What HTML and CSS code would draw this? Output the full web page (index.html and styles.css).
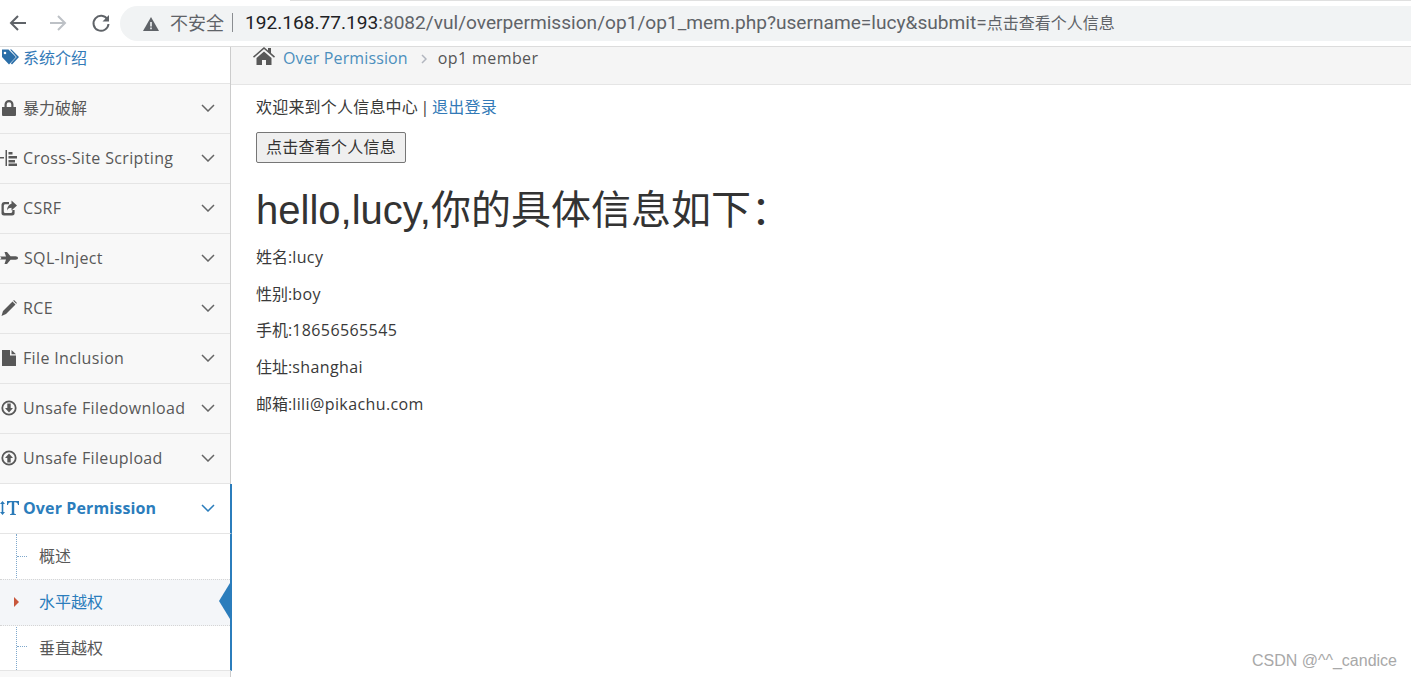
FILE: index.html
```html
<!DOCTYPE html>
<html>
<head>
  <title>Over Permission</title>
  <link rel="stylesheet" href="styles.css">
</head>
<body>
  <div class="browserBar">
    <svg class="navIcon" viewBox="0 0 20 20"><path d="M18 10H3M10 3l-7 7 7 7" fill="none" stroke="#5f6368" stroke-width="2"/></svg>
    <svg class="navIcon" viewBox="0 0 20 20"><path d="M2 10h15M10 3l7 7-7 7" fill="none" stroke="#bdc1c6" stroke-width="2"/></svg>
    <svg class="navIcon reload" viewBox="0 0 20 20"><path d="M16.5 6.500A7.500 7.500 0 1 0 17.500 11" fill="none" stroke="#5f6368" stroke-width="2"/><path d="M18 2v6.500h-6.500z" fill="#5f6368"/></svg>
    <div class="addressBar">
      <svg class="warnIcon" viewBox="0 0 16 14"><path d="M8 0l8 14H0z" fill="#5f6368"/><path d="M7.200 5h1.600v4.600H7.200zM7.200 10.600h1.600v1.600H7.200z" fill="#f1f3f4"/></svg>
      <span class="insecure">不安全</span>
      <span class="sep"></span>
      <span class="url"><b>192.168.77.193</b>:8082/vul/overpermission/op1/op1_mem.php?username=lucy&amp;submit=<i>点击查看个人信息</i></span>
    </div>
  </div>

  <div class="page">
    <ul class="sidebar">
      <li class="navItem intro">
        <svg class="icon tag" viewBox="0 0 17 16"><path d="M0 0h6.500L14 7.500 7 15 0 7.500zM3 2.200a1.300 1.300 0 1 0 0 2.600 1.300 1.300 0 0 0 0-2.600z" fill="#2a6ea8" fill-rule="evenodd"/><path d="M8 0h1.500L17 7.500 10 15 8.800 13.800 14.700 7.500z" fill="#2a6ea8"/></svg>
        <span>系统介绍</span>
      </li>
      <li class="navItem">
        <svg class="icon" viewBox="0 0 16 16"><path d="M1 7h14v8a1 1 0 0 1-1 1H2a1 1 0 0 1-1-1zM3.500 7V4.500a4.500 4.500 0 0 1 9 0V7h-2.200V4.500a2.300 2.300 0 0 0-4.600 0V7z" fill="#585858"/></svg>
        <span class="cjk">暴力破解</span>
        <svg class="chevron" viewBox="0 0 14 8"><path d="M1 1l6 6 6-6" fill="none" stroke="currentColor" stroke-width="1.500"/></svg>
      </li>
      <li class="navItem">
        <svg class="icon" viewBox="0 0 18 16"><path d="M0 7h4v1.500H0zM5.500 0H7v16H5.500zM8.500 2h4v2.500h-4zM8.500 6H17v2.500H8.500zM8.500 10H15v2.500H8.500zM8.500 13.500H17V16H8.500z" fill="#585858"/></svg>
        <span class="latin">Cross-Site Scripting</span>
        <svg class="chevron" viewBox="0 0 14 8"><path d="M1 1l6 6 6-6" fill="none" stroke="currentColor" stroke-width="1.500"/></svg>
      </li>
      <li class="navItem">
        <svg class="icon" viewBox="0 0 16 16"><path d="M3 2h5v2.200H4A1.500 1.500 0 0 0 2.800 5.700v5.800A1.500 1.500 0 0 0 4 13h6a1.500 1.500 0 0 0 1.300-1.500V10h2.300v2.500A2.700 2.700 0 0 1 11 15.500H3A2.700 2.700 0 0 1 .5 12.500v-8A2.700 2.700 0 0 1 3 2z" fill="#585858"/><path d="M10.500 .5L16 5.500l-5.500 5V7.800C8.500 7.800 7 8.500 6 10.500 6 7 8 4.500 10.500 3.800z" fill="#585858"/></svg>
        <span class="latin">CSRF</span>
        <svg class="chevron" viewBox="0 0 14 8"><path d="M1 1l6 6 6-6" fill="none" stroke="currentColor" stroke-width="1.500"/></svg>
      </li>
      <li class="navItem">
        <svg class="icon wide" viewBox="0 0 18 12"><path d="M0 4.500h6L4.500 0H7l3.500 4.300h5c1.500 0 2.500.8 2.500 1.700s-1 1.700-2.500 1.700h-5L7 12H4.500L6 7.500H0L1.500 6z" fill="#585858"/></svg>
        <span class="latin">SQL-Inject</span>
        <svg class="chevron" viewBox="0 0 14 8"><path d="M1 1l6 6 6-6" fill="none" stroke="currentColor" stroke-width="1.500"/></svg>
      </li>
      <li class="navItem">
        <svg class="icon" viewBox="0 0 16 16"><path d="M11.500 1.500l3 3L5 14l-4.500 2L2 11zM13 0l3 3-.8.8-3-3z" fill="#585858"/></svg>
        <span class="latin">RCE</span>
        <svg class="chevron" viewBox="0 0 14 8"><path d="M1 1l6 6 6-6" fill="none" stroke="currentColor" stroke-width="1.500"/></svg>
      </li>
      <li class="navItem">
        <svg class="icon" viewBox="0 0 14 16"><path d="M0 0h8v5.500h6V16H0zM9.500 0L14 4.200H9.500z" fill="#585858"/></svg>
        <span class="latin">File Inclusion</span>
        <svg class="chevron" viewBox="0 0 14 8"><path d="M1 1l6 6 6-6" fill="none" stroke="currentColor" stroke-width="1.500"/></svg>
      </li>
      <li class="navItem">
        <svg class="icon" viewBox="0 0 16 16"><circle cx="8" cy="8" r="6.700" fill="none" stroke="#585858" stroke-width="1.800"/><path d="M6.300 3.500h3.400V8H12l-4 4.500L4 8h2.300z" fill="#585858"/></svg>
        <span class="latin">Unsafe Filedownload</span>
        <svg class="chevron" viewBox="0 0 14 8"><path d="M1 1l6 6 6-6" fill="none" stroke="currentColor" stroke-width="1.500"/></svg>
      </li>
      <li class="navItem">
        <svg class="icon" viewBox="0 0 16 16"><circle cx="8" cy="8" r="6.700" fill="none" stroke="#585858" stroke-width="1.800"/><path d="M6.300 12.500h3.400V8H12L8 3.500 4 8h2.300z" fill="#585858"/></svg>
        <span class="latin">Unsafe Fileupload</span>
        <svg class="chevron" viewBox="0 0 14 8"><path d="M1 1l6 6 6-6" fill="none" stroke="currentColor" stroke-width="1.500"/></svg>
      </li>
      <li class="navItem open">
        <svg class="icon" viewBox="0 0 20 16"><path d="M2.500 1L5 4H3.300v8H5l-2.500 3L0 12h1.700V4H0z" fill="#2a7ab8"/><path d="M7 1h12v4h-1c-.3-1.800-1-2.700-3-2.700h-.8v10.500c0 1 .4 1.300 1.800 1.400V15H10v-.8c1.400-.1 1.800-.4 1.800-1.400V2.300H11C9 2.300 8.300 3.200 8 5H7z" fill="#2a7ab8"/></svg>
        <span>Over Permission</span>
        <svg class="chevron" viewBox="0 0 14 8"><path d="M1 1l6 6 6-6" fill="none" stroke="currentColor" stroke-width="1.500"/></svg>
      </li>
      <li class="subMenu">
        <div class="subItem">概述</div>
        <div class="subItem active">水平越权</div>
        <div class="subItem last">垂直越权</div>
      </li>
    </ul>

    <div class="main">
      <div class="breadcrumb">
        <svg class="homeIcon" viewBox="0 0 22 18"><path d="M11 0l4 3.500V1h3v5.100L22 9.600l-1 1.100L11 2.100 1 10.700 0 9.600zM3.500 11L11 4.500l7.500 6.500v7H13v-5H9v5H3.500z" fill="#585858"/></svg>
        <a class="crumbLink">Over Permission</a>
        <svg class="crumbSep" viewBox="0 0 6 10"><path d="M1 1l4 4-4 4" fill="none" stroke="#b2b6bf" stroke-width="1.500"/></svg>
        <span class="crumbText">op1 member</span>
      </div>
      <div class="content">
        <p class="welcome">欢迎来到个人信息中心 | <a>退出登录</a></p>
        <button class="viewBtn">点击查看个人信息</button>
        <h1>hello,lucy,你的具体信息如下：</h1>
        <p>姓名:<span>lucy</span></p>
        <p>性别:<span>boy</span></p>
        <p>手机:<span>18656565545</span></p>
        <p>住址:<span>shanghai</span></p>
        <p>邮箱:<span>lili@pikachu.com</span></p>
      </div>
    </div>
  </div>

  <div class="watermark">CSDN @^^_candice</div>
</body>
</html>
```

FILE: styles.css
```css
html, body { height: 100%; }
body {
  margin: 0;
  overflow: hidden;
  background: #fff;
  color: #393939;
  font-family: "Open Sans", "Noto Sans CJK SC", sans-serif;
  font-size: 16px;
}
a { color: #337ab7; }

.browserBar {
  height: 47px;
  box-sizing: border-box;
  display: flex;
  align-items: center;
  padding-left: 8px;
  border-bottom: 1px solid #dcdcdc;
  background: linear-gradient(#e0e0e0, #e0e0e0) 290px 0 / 100% 1px no-repeat #fff;
}
.navIcon { width: 20px; height: 20px; margin-right: 20px; flex: none; }
.navIcon.reload { margin-left: 3px; margin-right: 17px; }
.addressBar {
  flex: 1;
  height: 35px;
  box-sizing: border-box;
  margin-left: -8px;
  margin-top: 1px;
  display: flex;
  align-items: center;
  padding-left: 23px;
  padding-bottom: 3px;
  border-radius: 18px 0 0 18px;
  background: #f1f3f4;
  font-family: "Roboto", "Noto Sans CJK SC", sans-serif;
  font-size: 19.130px;
  color: #5f6368;
  white-space: nowrap;
}
.warnIcon { width: 16px; height: 14px; margin: 3px 11px 0 0; }
.insecure { font-size: 18px; }
.sep { width: 1px; height: 19px; margin: 0 12px 0 8px; background: #8a8d91; }
.url b { font-weight: normal; color: #202124; }
.url i { font-style: normal; font-size: 16px; }

.page { display: flex; height: 630px; }

.sidebar {
  width: 231px;
  flex: none;
  box-sizing: border-box;
  margin: 0;
  padding: 0;
  list-style: none;
  background: #f8f8f8;
  border-right: 1px solid #ccc;
}
.navItem {
  height: 50px;
  box-sizing: border-box;
  display: flex;
  align-items: center;
  padding-bottom: 2px;
  border-bottom: 1px solid #e5e5e5;
  color: #585858;
}
.navItem span { flex: 1; margin-left: 5px; white-space: nowrap; }
.navItem .latin { letter-spacing: 0.35px; }
.navItem .cjk { margin-top: -2px; }
.icon { width: 18px; height: 16px; flex: none; }
.icon.wide { height: 12px; margin-right: 1px; }
.icon.tag { width: 17px; height: 17px; margin-left: 2px; margin-right: -1px; }
.chevron { width: 14px; height: 8px; margin-right: 15px; color: #666; flex: none; }

.intro { height: 37px; background: #fff; color: #337ab7; padding-bottom: 16px; }
.open {
  background: #fff;
  color: #2b7dbc;
  font-weight: 700;
  margin-right: -2px;
  border-right: 2px solid #2b7dbc;
}
.open span { letter-spacing: 0.13px; }
.open .icon { width: 20px; margin-right: -2px; }
.open .chevron { color: #2b7dbc; }

.subMenu {
  position: relative;
  background: #fff;
  margin-right: -2px;
  border-right: 2px solid #2b7dbc;
  border-bottom: 1px solid #e5e5e5;
}
.subMenu::before {
  content: "";
  position: absolute;
  left: 16px;
  top: 0;
  bottom: 0;
  border-left: 1px dotted #7fa8cc;
}
.subItem {
  position: relative;
  height: 45px;
  box-sizing: border-box;
  display: flex;
  align-items: center;
  padding: 0 0 3px 39px;
  color: #585858;
}
.subItem::before {
  content: "";
  position: absolute;
  left: 17px;
  top: 22px;
  width: 10px;
  border-top: 1px dotted #7fa8cc;
}
.subItem.last { height: 44px; padding-bottom: 2px; }
.subItem.last::before { top: 20px; }
.subItem.active {
  height: 47px;
  background: #f4f6f9;
  color: #2b7dbc;
  border-top: 1px dotted #d5d5d5;
  border-bottom: 1px dotted #d5d5d5;
}
.subItem.active::before {
  left: 14px;
  top: 17px;
  width: 0;
  border-top: 5px solid transparent;
  border-bottom: 5px solid transparent;
  border-left: 5px solid #c8573c;
}
.subItem.active::after {
  content: "";
  position: absolute;
  right: 0;
  top: 3px;
  border-top: 18px solid transparent;
  border-bottom: 18px solid transparent;
  border-right: 11px solid #2b7dbc;
}

.main { flex: 1; min-width: 0; }
.breadcrumb {
  height: 38px;
  box-sizing: border-box;
  display: flex;
  align-items: center;
  padding: 0 0 16px 22px;
  background: #f5f5f5;
  border-bottom: 1px solid #e5e5e5;
  color: #555;
}
.homeIcon { width: 22px; height: 18px; margin-right: 8px; margin-top: -3px; }
.crumbLink { color: #4c8fbd; letter-spacing: 0.13px; }
.crumbSep { width: 6px; height: 10px; margin: 2px 11px 0 13px; }
.crumbText { letter-spacing: 0.4px; }

.content { padding: 11px 0 0 25px; }
.content p { margin: 0 0 13.750px; line-height: 23px; }
.content p span { letter-spacing: 0.4px; }
.welcome { letter-spacing: 0.2px; word-spacing: -1.800px; }
.viewBtn {
  display: block;
  width: 150px;
  height: 31px;
  padding: 0 0 2px;
  margin-top: -1px;
  background: #efefef;
  border: 1px solid #767676;
  border-radius: 2px;
  color: #333;
  font-family: "Noto Sans CJK SC", sans-serif;
  font-size: 16px;
  letter-spacing: 0.25px;
}
h1 {
  margin: 25px 0 14px;
  font-family: "Liberation Sans", "Noto Sans CJK SC", sans-serif;
  font-size: 40px;
  font-weight: 400;
  line-height: 44px;
  color: #333;
}

.watermark {
  position: absolute;
  right: 14px;
  bottom: 7px;
  font-family: "Liberation Sans", sans-serif;
  font-size: 16px;
  color: #a8a8a8;
}
```
